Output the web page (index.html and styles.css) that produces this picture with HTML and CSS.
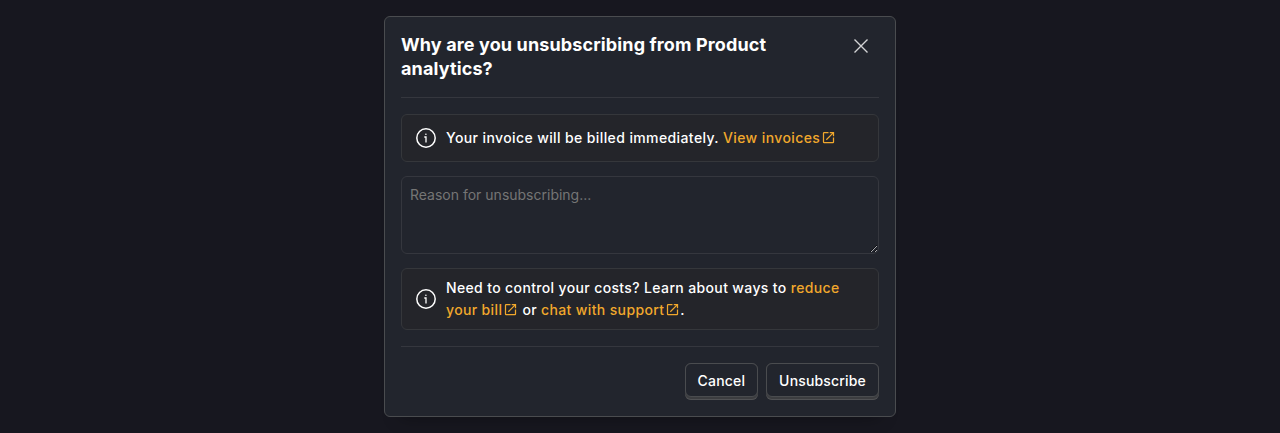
FILE: index.html
```
<!DOCTYPE html>
<html lang="en">
<head>
<meta charset="utf-8">
<title>Unsubscribe</title>
<link rel="stylesheet" href="styles.css">
</head>
<body>
<svg class="defs" width="0" height="0">
  <symbol id="info" viewBox="0 0 24 24"><circle cx="12" cy="12" r="9.2" fill="none" stroke="currentColor" stroke-width="1.5"/><circle cx="11.9" cy="8.2" r=".8" fill="currentColor"/><path d="M10.3 11h1.7v5.6" fill="none" stroke="currentColor" stroke-width="1.3"/></symbol>
  <symbol id="open" viewBox="0 0 24 24"><path d="M19 19H5V5h7V3H5a2 2 0 0 0-2 2v14a2 2 0 0 0 2 2h14a2 2 0 0 0 2-2v-7h-2v7ZM14 3v2h3.6l-9.8 9.8 1.4 1.4L19 6.4V10h2V3h-7Z" fill="currentColor"/></symbol>
</svg>
<div class="modal" role="dialog">
  <header class="header">
    <h3 class="title">Why are you unsubscribing from Product analytics?</h3>
    <button class="close" aria-label="Close"><svg width="24" height="24" viewBox="0 0 24 24"><path d="M5.5 5.5l13 13M18.5 5.5l-13 13" fill="none" stroke="currentColor" stroke-width="1.4"/></svg></button>
  </header>
  <section class="content">
    <div class="banner">
      <svg class="info"><use href="#info"/></svg>
      <div>Your invoice will be billed immediately. <a class="link">View invoices<svg class="open"><use href="#open"/></svg></a></div>
    </div>
    <textarea class="reason" placeholder="Reason for unsubscribing..."></textarea>
    <div class="banner banner-tall">
      <svg class="info"><use href="#info"/></svg>
      <div>Need to control your costs? Learn about ways to <a class="link">reduce your bill<svg class="open"><use href="#open"/></svg></a> or <a class="link">chat with support<svg class="open"><use href="#open"/></svg></a>.</div>
    </div>
  </section>
  <footer class="footer">
    <button class="button"><span class="face">Cancel</span></button>
    <button class="button"><span class="face">Unsubscribe</span></button>
  </footer>
</div>
</body>
</html>
```
FILE: styles.css
```
* { box-sizing: border-box; }
body {
  margin: 0;
  height: 433px;
  padding-top: 16px;
  overflow: hidden;
  background: #17171f;
  color: #fff;
  font: 14px/20px Inter, sans-serif;
}
.defs { position: absolute; }
.modal {
  width: 512px;
  height: 401px;
  margin: 0 auto;
  padding: 0 16px;
  border: 1px solid #4a4c4f;
  border-radius: 6px;
  background: #22252d;
  box-shadow: 0 16px 16px -16px rgba(0, 0, 0, .35);
}
.header {
  display: flex;
  justify-content: space-between;
  height: 81px;
  padding-top: 16px;
  border-bottom: 1px solid #35373e;
}
.title {
  width: 400px;
  margin: 0;
  font-size: 18px;
  font-weight: 700;
  line-height: 24px;
  letter-spacing: .13px;
}
.close {
  width: 24px;
  height: 24px;
  margin: 1px 6px 0 0;
  padding: 0;
  border: 0;
  background: none;
  color: #d3d4d5;
}
.content {
  display: flex;
  flex-direction: column;
  gap: 14px;
  padding: 16px 0;
}
.banner {
  display: flex;
  align-items: center;
  gap: 8px;
  height: 48px;
  padding: 0 12px;
  border: 1px solid #35373b;
  border-radius: 6px;
  background: #24252a;
  font-weight: 500;
  line-height: 22px;
  letter-spacing: .39px;
}
.banner-tall { height: 62px; }
.info {
  flex: none;
  width: 24px;
  height: 24px;
}
.link { color: #f1a82c; }
.open {
  width: 15px;
  height: 15px;
  margin-left: 1px;
  vertical-align: -2px;
}
.banner-tall > div { letter-spacing: .36px; }
.reason {
  width: 100%;
  height: 78px;
  margin: 0;
  padding: 8px;
  border: 1px solid #35373e;
  border-radius: 6px;
  background: #22252d;
  color: #fff;
  font: 14px/20px Inter, sans-serif;
  resize: vertical;
}
.reason::placeholder { color: #757575; }
.footer {
  display: flex;
  justify-content: flex-end;
  gap: 8px;
  padding-top: 16px;
  border-top: 1px solid #35373e;
}
.button {
  height: 37px;
  padding: 0 0 3px;
  border: 0;
  border-radius: 6px;
  background: #3c3d40;
  box-shadow: inset 0 -1px #515255;
  color: #fff;
  font: 500 14px/20px Inter, sans-serif;
  letter-spacing: .17px;
}
.face {
  display: block;
  height: 34px;
  padding: 7px 12px 5px;
  border: 1px solid #4a4c4f;
  border-radius: 6px;
  background: #22252d;
}
```
